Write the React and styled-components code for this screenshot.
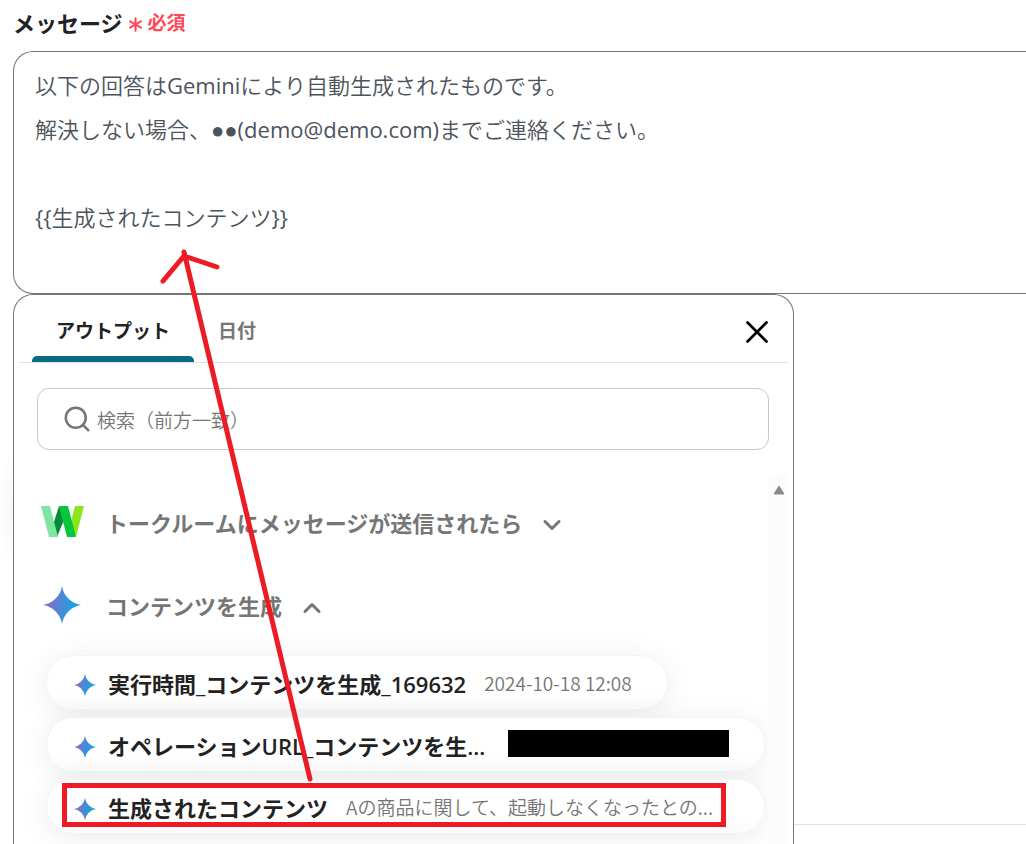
import React from 'react';
import styled, { createGlobalStyle, css } from 'styled-components';
import { Asterisk, ChevronDown, ChevronUp, Search, X } from 'lucide-react';

const GlobalStyle = createGlobalStyle`
    * {
        box-sizing: border-box;
    }

    body {
        margin: 0;
        background: #ffffff;
        color: #222222;
        font-family: 'Open Sans', 'Liberation Sans', 'Noto Sans CJK JP', sans-serif;
        overflow-x: hidden;
    }

    button,
    input,
    textarea {
        font-family: inherit;
    }
`;

const Page = styled.main`
    position: relative;
    display: flex;
    flex-direction: column;
    min-height: 100vh;
    padding-left: 13px;
    background: radial-gradient(ellipse 16px 60px at 13px 510px, #f5f7f6, #ffffff);
    overflow: hidden;
`;

const FieldHeader = styled.div`
    display: flex;
    align-items: center;
    height: 51px;
    padding-bottom: 8px;
`;

const FieldLabel = styled.label`
    font-size: 22px;
    font-weight: 600;
`;

const Required = styled.span`
    display: flex;
    align-items: center;
    color: #ff4757;
    font-size: 19px;
    font-weight: 600;

    svg {
        margin-top: 5px;
    }
`;

const MessageBox = styled.textarea`
    display: block;
    width: 100%;
    height: 243px;
    padding: 11px 21px;
    border: 1px solid #767676;
    border-right: none;
    border-radius: 20px 0 0 20px;
    background: #ffffff;
    color: #4b535d;
    font-family: 'Open Sans', 'Liberation Sans', 'Noto Sans CJK JP DemiLight', 'Noto Sans CJK JP', sans-serif;
    font-size: 22px;
    font-weight: 400;
    line-height: 44px;
    resize: none;
    outline: none;
`;

const Workspace = styled.div`
    display: flex;
    flex: 1;
`;

const Panel = styled.section`
    display: flex;
    flex-direction: column;
    width: 100%;
    max-width: 781px;
    padding: 0 5px;
    border: 1px solid #767676;
    border-bottom: none;
    border-radius: 20px 20px 0 0;
    background: #ffffff;
`;

const Backdrop = styled.div`
    flex: 1;
    margin-bottom: 19px;
    border-bottom: 1px solid #e2e2e2;
`;

const TabBar = styled.div`
    display: flex;
    align-items: stretch;
    height: 68px;
    padding: 0 12px 0 13px;
    border-bottom: 1px solid #e2e2e2;
`;

const Tab = styled.button`
    padding: 8px 24px 0;
    border: none;
    border-bottom: 6px solid transparent;
    background: none;
    color: #767676;
    font-size: 19px;
    font-weight: 600;

    ${({ $active }) =>
        $active &&
        css`
            position: relative;
            color: #222222;

            &::after {
                content: '';
                position: absolute;
                left: 0;
                right: 0;
                bottom: -6px;
                height: 6px;
                border-radius: 5px 5px 0 0;
                background: #086b84;
            }
        `}
`;

const CloseButton = styled.button`
    display: flex;
    align-items: center;
    margin-left: auto;
    padding: 7px 0 0;
    border: none;
    background: none;
    color: #000000;
`;

const SearchBox = styled.label`
    display: flex;
    align-items: center;
    gap: 5px;
    height: 62px;
    margin: 25px 19px 24px 18px;
    padding: 0 24px;
    border: 1px solid #c8c8c8;
    border-radius: 12px;
    color: #767676;
`;

const SearchInput = styled.input`
    flex: 1;
    min-width: 0;
    padding: 3px 0 0;
    border: none;
    outline: none;
    background: none;
    color: #222222;
    font-size: 19px;
    font-weight: 350;

    &::placeholder {
        color: #767676;
        opacity: 1;
    }
`;

const ScrollArea = styled.div`
    display: flex;
    flex: 1;
`;

const OutputList = styled.div`
    flex: 1;
    min-width: 0;
    padding: 6px 4px 0 21px;
    overflow: hidden;
`;

const ScrollTrack = styled.div`
    display: flex;
    justify-content: center;
    width: 19px;
    padding-top: 11px;
    background: #fcfcfc;
`;

const GroupButton = styled.button`
    display: flex;
    align-items: center;
    height: 83px;
    padding: 0;
    border: none;
    background: none;
    color: #767676;
    font-size: 22px;
    font-weight: 600;
`;

const GroupIcon = styled.span`
    display: flex;
    justify-content: center;
    width: 44px;
    margin-right: 22px;
`;

const GroupName = styled.span`
    margin-right: 16px;

    & + svg {
        margin-top: 6px;
    }
`;

const Pills = styled.div`
    display: flex;
    flex-direction: column;
    align-items: flex-start;
    gap: 7px;
    margin-top: 9px;
    padding-left: 6px;
`;

const Pill = styled.button`
    position: relative;
    display: flex;
    align-items: center;
    max-width: 100%;
    width: ${({ $wide }) => ($wide ? '100%' : 'auto')};
    height: 55px;
    padding: 0 35px 0 27px;
    border: 1px solid #f3f3f3;
    border-radius: 28px;
    background: linear-gradient(#ffffff 60%, #fbfbfb);
    box-shadow: 0 4px 30px rgba(0, 0, 0, 0.08);
    text-align: left;

    svg {
        flex: none;
        margin-top: 4px;
    }
`;

const PillName = styled.span`
    margin: 0 18px 0 12px;
    color: #222222;
    font-size: 22px;
    font-weight: 600;
    white-space: nowrap;
`;

const PillValue = styled.span`
    color: #767676;
    font-family: 'Noto Sans CJK JP', sans-serif;
    font-size: 19px;
    font-weight: 350;
    white-space: nowrap;
`;

const Redacted = styled.span`
    flex: none;
    width: 221px;
    height: 27px;
    margin: 0 0 3px auto;
    background: #000000;
`;

const Highlight = styled.span`
    position: absolute;
    top: 3px;
    right: 38px;
    bottom: 6px;
    left: 15px;
    border: 5px solid #ed1c24;
    pointer-events: none;
`;

const ArrowMark = styled.svg`
    position: absolute;
    top: 240px;
    left: 150px;
    pointer-events: none;
`;

const Sparkle = ({ size, id }) => (
    <svg width={size} height={size} viewBox="0 0 24 24" aria-hidden="true">
        <defs>
            <linearGradient id={id} x1="0" y1="10" x2="24" y2="14" gradientUnits="userSpaceOnUse">
                <stop offset="0" stopColor="#9e68b8" />
                <stop offset="0.4" stopColor="#5684d1" />
                <stop offset="0.8" stopColor="#1ba1e3" />
            </linearGradient>
        </defs>
        <path
            d="M12 24A14.3 14.3 0 0 0 0 12A14.3 14.3 0 0 0 12 0A14.3 14.3 0 0 0 24 12A14.3 14.3 0 0 0 12 24Z"
            fill={`url(#${id})`}
        />
    </svg>
);

const WorksLogo = () => (
    <svg width="43" height="32" viewBox="0 0 43 32" aria-hidden="true">
        <path d="M34 0H43L35 31L29 19Z" fill="#8ae61a" />
        <path d="M18 0L12 19L16 31L23 14Z" fill="#078a3c" />
        <path d="M0 0H9L17 31H8Z" fill="#7fe5a2" />
        <path d="M18 0H27L35 31H26Z" fill="#06c73c" />
    </svg>
);

const message = `以下の回答はGeminiにより自動生成されたものです。
解決しない場合、●●(demo@demo.com)までご連絡ください。

{{生成されたコンテンツ}}`;

const outputs = [
    { id: 'time', name: '実行時間_コンテンツを生成_169632', value: '2024-10-18 12:08' },
    { id: 'url', name: 'オペレーションURL_コンテンツを生...', redacted: true, wide: true },
    {
        id: 'content',
        name: '生成されたコンテンツ',
        value: 'Aの商品に関して、起動しなくなったとの...',
        wide: true,
        highlighted: true,
    },
];

const App = () => {
    return (
        <Page>
            <GlobalStyle />
            <FieldHeader>
                <FieldLabel htmlFor="message">メッセージ</FieldLabel>
                <Required>
                    <Asterisk size={25} strokeWidth={2} />
                    必須
                </Required>
            </FieldHeader>
            <MessageBox id="message" defaultValue={message} spellCheck={false} />
            <Workspace>
                <Panel>
                    <TabBar role="tablist">
                        <Tab role="tab" aria-selected="true" $active>
                            アウトプット
                        </Tab>
                        <Tab role="tab" aria-selected="false">
                            日付
                        </Tab>
                        <CloseButton aria-label="閉じる">
                            <X size={38} strokeWidth={1.7} />
                        </CloseButton>
                    </TabBar>
                    <SearchBox>
                        <Search size={30} strokeWidth={2} />
                        <SearchInput type="text" placeholder="検索（前方一致）" aria-label="検索" />
                    </SearchBox>
                    <ScrollArea>
                        <OutputList>
                            <GroupButton aria-expanded="false">
                                <GroupIcon>
                                    <WorksLogo />
                                </GroupIcon>
                                <GroupName>トークルームにメッセージが送信されたら</GroupName>
                                <ChevronDown size={28} strokeWidth={2.6} />
                            </GroupButton>
                            <GroupButton aria-expanded="true">
                                <GroupIcon>
                                    <Sparkle size={38} id="sparkle-group" />
                                </GroupIcon>
                                <GroupName>コンテンツを生成</GroupName>
                                <ChevronUp size={28} strokeWidth={2.6} />
                            </GroupButton>
                            <Pills>
                                {outputs.map(item => (
                                    <Pill key={item.id} $wide={item.wide}>
                                        <Sparkle size={22} id={`sparkle-${item.id}`} />
                                        <PillName>{item.name}</PillName>
                                        {item.redacted ? <Redacted /> : <PillValue>{item.value}</PillValue>}
                                        {item.highlighted && <Highlight />}
                                    </Pill>
                                ))}
                            </Pills>
                        </OutputList>
                        <ScrollTrack>
                            <svg width="12" height="10" viewBox="0 0 12 10" aria-hidden="true">
                                <path d="M6 1L11 9H1Z" fill="#8b8b8b" stroke="#8b8b8b" strokeLinejoin="round" />
                            </svg>
                        </ScrollTrack>
                    </ScrollArea>
                </Panel>
                <Backdrop />
            </Workspace>
            <ArrowMark width="180" height="550" viewBox="150 240 180 550" aria-hidden="true">
                <path
                    d="M310 779L184 252M163 281L184 256L217 267"
                    fill="none"
                    stroke="#ed1c24"
                    strokeWidth="5"
                    strokeLinecap="round"
                    strokeLinejoin="round"
                />
            </ArrowMark>
        </Page>
    );
};

export default App;
